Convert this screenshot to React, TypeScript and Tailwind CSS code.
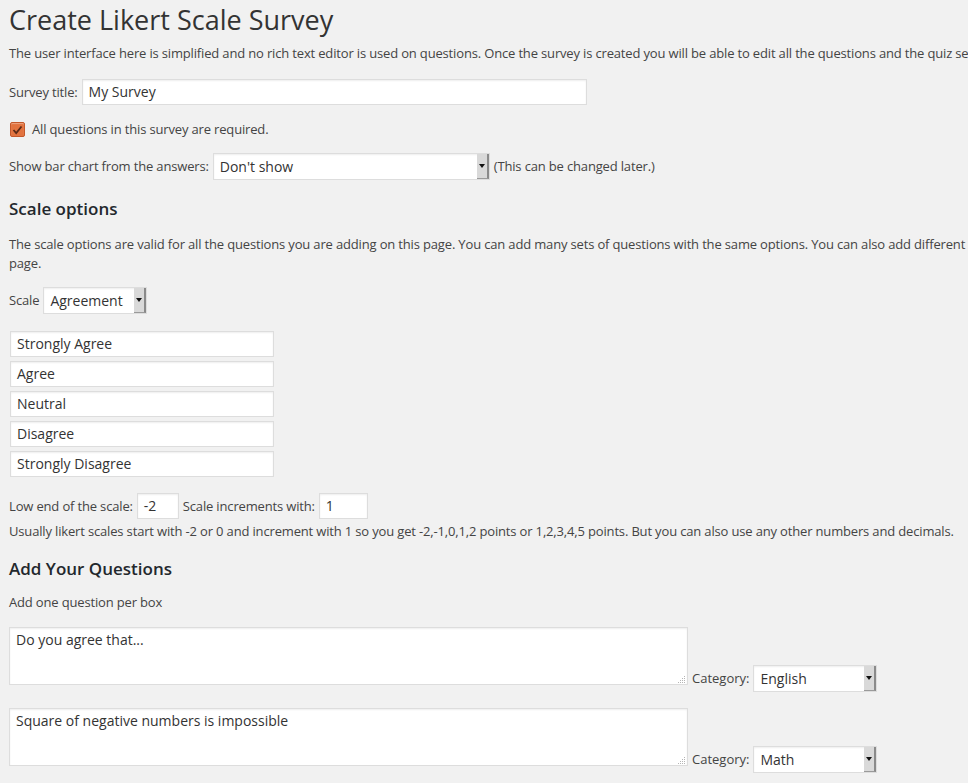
import React from 'react';

const font = { fontFamily: '"Open Sans", "Liberation Sans", sans-serif' };

function FakeSelect({ value, width }: { value: string; width: string }) {
  return (
    <div className={`flex h-[27px] ${width} shrink-0 items-stretch border border-[#dddddd] bg-white shadow-[inset_0_1px_2px_rgba(0,0,0,0.07)]`}>
      <span className="flex-1 truncate pl-[6px] text-[14px] leading-[25px] tracking-normal text-[#333]">{value}</span>
      <span className="flex w-[12px] items-center justify-center border-r-2 border-b border-r-[#8a8a8a] border-b-[#9a9a9a] bg-[#d9d9d9]">
        <svg width="6" height="4" viewBox="0 0 6 4">
          <path d="M0 0h6L3 4z" fill="#111" />
        </svg>
      </span>
    </div>
  );
}

function TextBox({ value, className }: { value: string; className: string }) {
  return (
    <div className={`h-[26px] shrink-0 border border-[#dddddd] bg-white pl-[6px] text-[14px] leading-[24px] tracking-normal text-[#333] shadow-[inset_0_1px_2px_rgba(0,0,0,0.07)] ${className}`}>
      {value}
    </div>
  );
}

function QuestionRow({ text, category, className }: { text: string; category: string; className: string }) {
  return (
    <div className={`flex items-start ${className}`}>
      <div className="relative h-[58px] w-[679px] shrink-0 border border-[#dddddd] bg-white px-[6px] pt-[2px] text-[14px] leading-[20px] tracking-normal text-[#333] shadow-[inset_0_1px_2px_rgba(0,0,0,0.07)]">
        {text}
        <svg className="absolute bottom-[1px] right-[1px]" width="8" height="8" viewBox="0 0 8 8">
          <g fill="#b5b5b5">
            <rect x="6" y="1" width="1" height="1" />
            <rect x="4" y="3" width="1" height="1" />
            <rect x="6" y="3" width="1" height="1" />
            <rect x="2" y="5" width="1" height="1" />
            <rect x="4" y="5" width="1" height="1" />
            <rect x="6" y="5" width="1" height="1" />
            <rect x="0" y="7" width="1" height="1" />
            <rect x="2" y="7" width="1" height="1" />
            <rect x="4" y="7" width="1" height="1" />
            <rect x="6" y="7" width="1" height="1" />
          </g>
        </svg>
      </div>
      <span className="ml-[4px] mt-[42px] leading-[19px] tracking-normal">Category:</span>
      <div className="ml-[4px] mt-[38px]">
        <FakeSelect value={category} width="w-[124px]" />
      </div>
    </div>
  );
}

export default function App() {
  const options = ['Strongly Agree', 'Agree', 'Neutral', 'Disagree', 'Strongly Disagree'];

  return (
    <div className="min-h-screen w-full overflow-hidden bg-[#f1f1f1] text-[13px] tracking-[-0.16px] text-[#444]" style={font}>
      <div className="flex w-[1124px] flex-col pl-[9px] leading-[19px]">
        <h1 className="mt-[3px] text-[27px] leading-[33px] font-normal tracking-normal text-[#333]">Create Likert Scale Survey</h1>

        <p className="mt-[8px]">
          The user interface here is simplified and no rich text editor is used on questions. Once the survey is created you will be able to edit all the questions and the quiz settings.
        </p>

        <div className="mt-[16px] flex items-center">
          <span>Survey title:</span>
          <TextBox value="My Survey" className="ml-[4px] w-[505px]" />
        </div>

        <label className="mt-[15px] flex items-center">
          <span className="ml-[1px] flex h-[15px] w-[15px] items-center justify-center rounded-[2px] border border-[#c4582a] bg-[#e2733f] shadow-[inset_0_1px_1px_rgba(255,255,255,0.35)]">
            <svg width="11" height="10" viewBox="0 0 11 10">
              <path d="M1.5 5 L4.2 8 L9.5 1.5" fill="none" stroke="#5b2a17" strokeWidth="1.8" />
            </svg>
          </span>
          <span className="ml-[7px]">All questions in this survey are required.</span>
        </label>

        <div className="mt-[14px] flex items-center">
          <span>Show bar chart from the answers:</span>
          <div className="ml-[4px]">
            <FakeSelect value="Don't show" width="w-[277px]" />
          </div>
          <span className="ml-[4px]">(This can be changed later.)</span>
        </div>

        <h3 className="mt-[18px] text-[17px] leading-[22px] font-semibold tracking-normal text-[#23282d]">Scale options</h3>

        <p className="mt-[15px]">
          The scale options are valid for all the questions you are adding on this page. You can add many sets of questions with the same options. You can also add different scale options on this page.
        </p>

        <div className="mt-[14px] flex items-center">
          <span>Scale</span>
          <div className="ml-[4px]">
            <FakeSelect value="Agreement" width="w-[104px]" />
          </div>
        </div>

        <div className="mt-[17px] flex flex-col gap-[4px] pl-[1px]">
          {options.map((o) => (
            <TextBox key={o} value={o} className="w-[264px]" />
          ))}
        </div>

        <div className="mt-[16px] flex items-center">
          <span>Low end of the scale:</span>
          <TextBox value="-2" className="ml-[4px] w-[42px]" />
          <span className="ml-[4px]">Scale increments with:</span>
          <TextBox value="1" className="ml-[4px] w-[49px]" />
        </div>

        <p className="mt-[3px]">
          Usually likert scales start with -2 or 0 and increment with 1 so you get -2,-1,0,1,2 points or 1,2,3,4,5 points. But you can also use any other numbers and decimals.
        </p>

        <h3 className="mt-[17px] text-[17px] leading-[22px] font-semibold tracking-normal text-[#23282d]">Add Your Questions</h3>

        <p className="mt-[13px]">Add one question per box</p>

        <QuestionRow text="Do you agree that..." category="English" className="mt-[15px]" />
        <QuestionRow text="Square of negative numbers is impossible" category="Math" className="mt-[16px]" />
      </div>
    </div>
  );
}
